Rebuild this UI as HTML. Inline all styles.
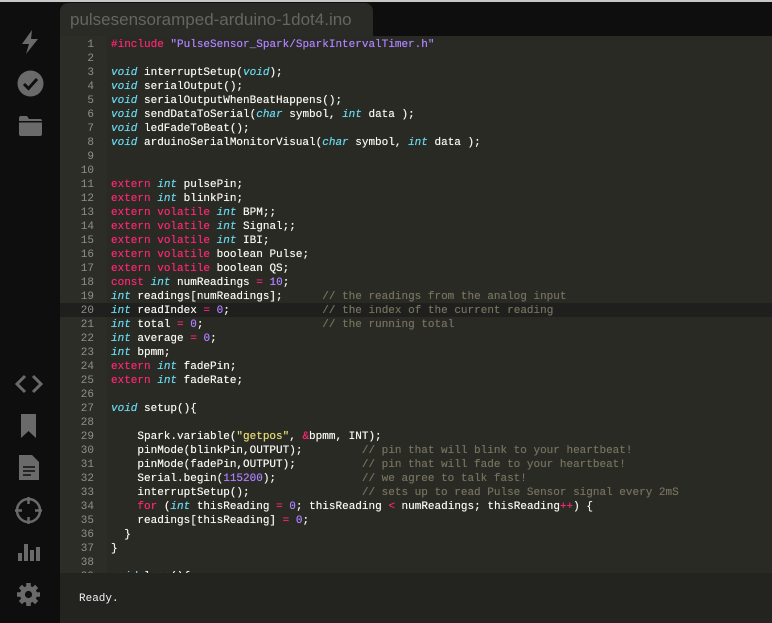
<!DOCTYPE html>
<html><head><meta charset="utf-8"><style>
html,body{margin:0;padding:0;width:772px;height:623px;overflow:hidden;background:#0e0e0e;font-family:"Liberation Sans",sans-serif}
.topline{position:absolute;left:0;top:0;width:772px;height:2px;background:#c8c8c8}
.side{position:absolute;left:0;top:2px;width:60px;height:621px;background:#0e0e0e}
.tab{position:absolute;left:60px;top:3px;width:313px;height:40px;background:#2a2a26;border-radius:8px 8px 0 0;color:#66665f;font-size:17px;line-height:34px;padding-left:10px;box-sizing:border-box}
.ed{position:absolute;left:60px;top:36px;width:712px;height:537px;background:#2a2a25;overflow:hidden}
.gut{position:absolute;left:0;top:0;width:47px;height:537px;background:#2d2d28}
.hl{position:absolute;left:0;top:267px;width:712px;height:14px;background:#1f1f1d}
pre{margin:0;position:absolute;top:2px;font-family:"Liberation Mono",monospace;font-size:11px;line-height:14px;color:#f8f8f2}
.num{left:0;width:34px;text-align:right;color:#8f908a}
.code{left:51px;text-shadow:0 0 0.4px currentColor}
.k{color:#f92672}.t{color:#66d9ef;font-style:italic}.n{color:#ae81ff}.s{color:#e6db74}.c{color:#75715e}
.con{position:absolute;left:60px;top:573px;width:712px;height:50px;background:#232320;color:#f0f0f0;font-family:"Liberation Mono",monospace;font-size:11px}
.con span{position:absolute;left:19px;top:20px}
svg{position:absolute}
</style></head><body>
<div class="topline"></div>
<div class="side">
<svg style="left:18px;top:27px" width="24" height="26" viewBox="0 0 24 26"><path d="M14 1 L4 15 H11 L8 25 L20 10 H13 Z" fill="#6a6a6a"/></svg>
<svg style="left:17px;top:68px" width="27" height="27" viewBox="0 0 27 27"><circle cx="13.5" cy="13.5" r="13" fill="#6a6a6a"/><path d="M7 14 L11.5 18.5 L20 9" stroke="#0e0e0e" stroke-width="3" fill="none"/></svg>
<svg style="left:19px;top:114px" width="23" height="20" viewBox="0 0 23 20"><path d="M0 2 Q0 0 2 0 H8 L10 3 H21 Q23 3 23 5 V18 Q23 20 21 20 H2 Q0 20 0 18 Z" fill="#6a6a6a"/><rect x="0" y="5" width="23" height="1.5" fill="#0e0e0e"/></svg>
<svg style="left:15px;top:372px" width="28" height="20" viewBox="0 0 28 20"><path d="M10 2 L2 10 L10 18 M18 2 L26 10 L18 18" stroke="#6a6a6a" stroke-width="3" fill="none"/></svg>
<svg style="left:21px;top:412px" width="15" height="24" viewBox="0 0 15 24"><path d="M0 0 H15 V24 L7.5 17 L0 24 Z" fill="#6a6a6a"/></svg>
<svg style="left:19px;top:453px" width="20" height="25" viewBox="0 0 20 25"><path d="M0 0 H13 L20 7 V25 H0 Z" fill="#6a6a6a"/><path d="M4 12 H16 M4 16 H16 M4 20 H12" stroke="#0e0e0e" stroke-width="1.5"/></svg>
<svg style="left:15px;top:495px" width="27" height="27" viewBox="0 0 27 27"><circle cx="13.5" cy="13.5" r="11.5" stroke="#6a6a6a" stroke-width="2.5" fill="none"/><path d="M13.5 0 V7 M13.5 20 V27 M0 13.5 H7 M20 13.5 H27" stroke="#6a6a6a" stroke-width="2.5"/></svg>
<svg style="left:18px;top:538px" width="22" height="21" viewBox="0 0 22 21"><rect x="0" y="13" width="4" height="8" fill="#6a6a6a"/><rect x="6" y="4" width="4" height="17" fill="#6a6a6a"/><rect x="12" y="10" width="4" height="11" fill="#6a6a6a"/><rect x="18" y="7" width="4" height="14" fill="#6a6a6a"/></svg>
<svg style="left:16px;top:580px" width="25" height="25" viewBox="0 0 25 25"><g fill="#6a6a6a"><circle cx="12.5" cy="12.5" r="8.5"/><g stroke="#6a6a6a" stroke-width="4.5"><path d="M12.5 1 V24 M1 12.5 H24 M4.4 4.4 L20.6 20.6 M20.6 4.4 L4.4 20.6"/></g></g><circle cx="12.5" cy="12.5" r="3.6" fill="#0e0e0e"/></svg>
</div>
<div class="tab">pulsesensoramped-arduino-1dot4.ino</div>
<div class="ed">
<div class="gut"></div>
<div class="hl"></div>
<pre class="num">1
2
3
4
5
6
7
8
9
10
11
12
13
14
15
16
17
18
19
20
21
22
23
24
25
26
27
28
29
30
31
32
33
34
35
36
37
38
39</pre>
<pre class="code"><span class="k">#include</span> <span class="n">"PulseSensor_Spark/SparkIntervalTimer.h"</span>

<span class="t">void</span> interruptSetup(<span class="t">void</span>);
<span class="t">void</span> serialOutput();
<span class="t">void</span> serialOutputWhenBeatHappens();
<span class="t">void</span> sendDataToSerial(<span class="t">char</span> symbol, <span class="t">int</span> data );
<span class="t">void</span> ledFadeToBeat();
<span class="t">void</span> arduinoSerialMonitorVisual(<span class="t">char</span> symbol, <span class="t">int</span> data );


<span class="k">extern</span> <span class="t">int</span> pulsePin;
<span class="k">extern</span> <span class="t">int</span> blinkPin;
<span class="k">extern</span> <span class="k">volatile</span> <span class="t">int</span> BPM;;
<span class="k">extern</span> <span class="k">volatile</span> <span class="t">int</span> Signal;;
<span class="k">extern</span> <span class="k">volatile</span> <span class="t">int</span> IBI;
<span class="k">extern</span> <span class="k">volatile</span> boolean Pulse;
<span class="k">extern</span> <span class="k">volatile</span> boolean QS;
<span class="k">const</span> <span class="t">int</span> numReadings <span class="k">=</span> <span class="n">10</span>;
<span class="t">int</span> readings[numReadings];      <span class="c">// the readings from the analog input</span>
<span class="t">int</span> readIndex <span class="k">=</span> <span class="n">0</span>;              <span class="c">// the index of the current reading</span>
<span class="t">int</span> total <span class="k">=</span> <span class="n">0</span>;                  <span class="c">// the running total</span>
<span class="t">int</span> average <span class="k">=</span> <span class="n">0</span>;
<span class="t">int</span> bpmm;
<span class="k">extern</span> <span class="t">int</span> fadePin;
<span class="k">extern</span> <span class="t">int</span> fadeRate;

<span class="t">void</span> setup(){

    Spark.variable(<span class="s">"getpos"</span>, <span class="k">&amp;</span>bpmm, INT);
    pinMode(blinkPin,OUTPUT);         <span class="c">// pin that will blink to your heartbeat!</span>
    pinMode(fadePin,OUTPUT);          <span class="c">// pin that will fade to your heartbeat!</span>
    Serial.begin(<span class="n">115200</span>);             <span class="c">// we agree to talk fast!</span>
    interruptSetup();                 <span class="c">// sets up to read Pulse Sensor signal every 2mS</span>
    <span class="k">for</span> (<span class="t">int</span> thisReading <span class="k">=</span> <span class="n">0</span>; thisReading <span class="k">&lt;</span> numReadings; thisReading<span class="k">++</span>) {
    readings[thisReading] <span class="k">=</span> <span class="n">0</span>;
  }
}

<span class="t">void</span> loop(){</pre>
</div>
<div class="con"><span>Ready.</span></div>
</body></html>
